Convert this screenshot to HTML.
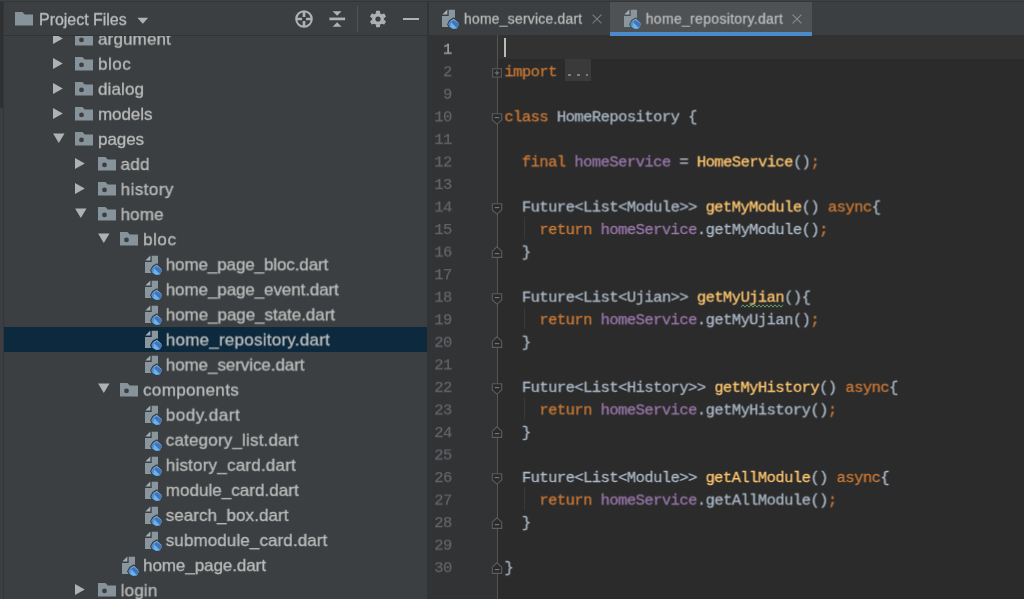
<!DOCTYPE html>
<html><head><meta charset="utf-8"><title>IDE</title>
<style>
html,body{margin:0;padding:0;}
body{width:1024px;height:599px;overflow:hidden;background:#3c3f41;position:relative;font-family:"Liberation Sans",sans-serif;}
.abs{position:absolute;}
.ic{position:absolute;display:block;overflow:visible;}
#topline{position:absolute;left:0;top:0;width:1024px;height:2.4px;background:#333536;border-top:0.9px solid #3e4143;box-sizing:border-box;}
#leftstrip{position:absolute;left:0;top:2px;width:3px;height:106px;background:#2e3032;}
#leftline{position:absolute;left:3px;top:2px;width:1px;height:597px;background:#333637;}
#tree{position:absolute;left:0;top:0;width:427.2px;height:599px;overflow:hidden;}
#hdr{position:absolute;left:4px;top:2px;width:423.2px;height:32.5px;background:#3c3f41;border-bottom:1px solid #313435;}
.sel{position:absolute;left:4px;width:423.2px;background:#0d293e;}
.layer{position:absolute;left:0;top:0;width:1024px;height:599px;will-change:transform;}
.tx,.ln,.cl,#ptitle,.tabtx{left:0;top:0;will-change:transform;transform-origin:0 0;}
.tx{position:absolute;height:25px;line-height:25px;font-size:17px;color:#bbbbbb;white-space:pre;-webkit-text-stroke:0.3px #bbbbbb;}
#ptitle{position:absolute;transform:translate(39.00px,4.15px) rotate(0.001deg);height:32px;line-height:32px;font-size:16px;color:#bbbbbb;white-space:pre;letter-spacing:-0.028px;-webkit-text-stroke:0.3px #bbbbbb;}
#editor{position:absolute;left:427.2px;top:2px;width:596.8px;height:597px;background:#2b2b2b;overflow:hidden;}
#tabs{position:absolute;left:427.2px;top:2px;width:596.8px;height:33px;background:#3c3f41;}
#tabsep{position:absolute;left:427.2px;top:2px;width:1.5px;height:33px;background:#323536;}
#atab{position:absolute;left:610.2px;top:2px;width:202px;height:33px;background:#4e5254;}
#aline{position:absolute;left:610.2px;top:32.2px;width:202px;height:4px;background:#4b8acb;}
.tabtx{position:absolute;height:33px;line-height:33px;color:#bbbbbb;white-space:pre;-webkit-text-stroke:0.25px #bbbbbb;}
#gutter{position:absolute;left:427.2px;top:35px;width:69.69999999999999px;height:564px;background:#313335;}
#gline{position:absolute;left:496.9px;top:35px;width:1px;height:564px;background:#555555;}
#curline{position:absolute;left:497.9px;top:35px;width:526.1px;height:23.80px;background:#323232;}
.ln,.cl{position:absolute;height:22px;line-height:22px;font-family:"Liberation Mono",monospace;font-size:15.5px;letter-spacing:-0.557px;white-space:pre;}
.ln{width:31.86px;text-align:right;color:#606366;-webkit-text-stroke:0.25px #606366;}
.ln.cur{color:#a4a3a3;-webkit-text-stroke:0.25px #a4a3a3;}
.cl{color:#a9b7c6;-webkit-text-stroke:0.27px;}
.k{color:#cc7832;} .t{color:#a9b7c6;} .f{color:#ffc66d;} .p{color:#9876aa;}
.fold{color:#7c7c7c;-webkit-text-stroke:0;}
#foldbg{position:absolute;left:565.2px;top:58.80px;width:26.2px;height:22.05px;background:#3a3a3a;}
.guide{position:absolute;width:1px;background:#393939;}
#caret{position:absolute;left:503.9px;top:38px;width:2.2px;height:19.3px;background:#bbbbbb;}
</style></head>
<body>
<div id="tree">
<svg class="ic" style="left:52.70px;top:31.80px" width="12" height="13" viewBox="0 0 12 13"><path d="M0 1 L9.8 6.5 L0 12 Z" fill="#afb1b3"/></svg>
<svg class="ic" style="left:75.05px;top:31.60px" width="20" height="16" viewBox="0 0 20 16"><path d="M0 0 H7.4 L9.8 2.6 H18.0 V13.4 H0 Z" fill="#87939a"/><circle cx="6.5" cy="7.9" r="2.4" fill="#3c3f41"/></svg>
<svg class="ic" style="left:52.70px;top:56.87px" width="12" height="13" viewBox="0 0 12 13"><path d="M0 1 L9.8 6.5 L0 12 Z" fill="#afb1b3"/></svg>
<svg class="ic" style="left:75.05px;top:56.67px" width="20" height="16" viewBox="0 0 20 16"><path d="M0 0 H7.4 L9.8 2.6 H18.0 V13.4 H0 Z" fill="#87939a"/><circle cx="6.5" cy="7.9" r="2.4" fill="#3c3f41"/></svg>
<svg class="ic" style="left:52.70px;top:81.94px" width="12" height="13" viewBox="0 0 12 13"><path d="M0 1 L9.8 6.5 L0 12 Z" fill="#afb1b3"/></svg>
<svg class="ic" style="left:75.05px;top:81.74px" width="20" height="16" viewBox="0 0 20 16"><path d="M0 0 H7.4 L9.8 2.6 H18.0 V13.4 H0 Z" fill="#87939a"/><circle cx="6.5" cy="7.9" r="2.4" fill="#3c3f41"/></svg>
<svg class="ic" style="left:52.70px;top:107.01px" width="12" height="13" viewBox="0 0 12 13"><path d="M0 1 L9.8 6.5 L0 12 Z" fill="#afb1b3"/></svg>
<svg class="ic" style="left:75.05px;top:106.81px" width="20" height="16" viewBox="0 0 20 16"><path d="M0 0 H7.4 L9.8 2.6 H18.0 V13.4 H0 Z" fill="#87939a"/><circle cx="6.5" cy="7.9" r="2.4" fill="#3c3f41"/></svg>
<svg class="ic" style="left:52.70px;top:132.58px" width="13" height="12" viewBox="0 0 13 12"><path d="M0.1 0.6 H11.5 L5.8 10 Z" fill="#afb1b3"/></svg>
<svg class="ic" style="left:75.05px;top:131.88px" width="20" height="16" viewBox="0 0 20 16"><path d="M0 0 H7.4 L9.8 2.6 H18.0 V13.4 H0 Z" fill="#87939a"/><circle cx="6.5" cy="7.9" r="2.4" fill="#3c3f41"/></svg>
<svg class="ic" style="left:75.25px;top:157.15px" width="12" height="13" viewBox="0 0 12 13"><path d="M0 1 L9.8 6.5 L0 12 Z" fill="#afb1b3"/></svg>
<svg class="ic" style="left:97.85px;top:156.95px" width="20" height="16" viewBox="0 0 20 16"><path d="M0 0 H7.4 L9.8 2.6 H18.0 V13.4 H0 Z" fill="#87939a"/><circle cx="6.5" cy="7.9" r="2.4" fill="#3c3f41"/></svg>
<svg class="ic" style="left:75.25px;top:182.22px" width="12" height="13" viewBox="0 0 12 13"><path d="M0 1 L9.8 6.5 L0 12 Z" fill="#afb1b3"/></svg>
<svg class="ic" style="left:97.85px;top:182.02px" width="20" height="16" viewBox="0 0 20 16"><path d="M0 0 H7.4 L9.8 2.6 H18.0 V13.4 H0 Z" fill="#87939a"/><circle cx="6.5" cy="7.9" r="2.4" fill="#3c3f41"/></svg>
<svg class="ic" style="left:75.25px;top:207.79px" width="13" height="12" viewBox="0 0 13 12"><path d="M0.1 0.6 H11.5 L5.8 10 Z" fill="#afb1b3"/></svg>
<svg class="ic" style="left:97.85px;top:207.09px" width="20" height="16" viewBox="0 0 20 16"><path d="M0 0 H7.4 L9.8 2.6 H18.0 V13.4 H0 Z" fill="#87939a"/><circle cx="6.5" cy="7.9" r="2.4" fill="#3c3f41"/></svg>
<svg class="ic" style="left:97.75px;top:232.86px" width="13" height="12" viewBox="0 0 13 12"><path d="M0.1 0.6 H11.5 L5.8 10 Z" fill="#afb1b3"/></svg>
<svg class="ic" style="left:120.00px;top:232.16px" width="20" height="16" viewBox="0 0 20 16"><path d="M0 0 H7.4 L9.8 2.6 H18.0 V13.4 H0 Z" fill="#87939a"/><circle cx="6.5" cy="7.9" r="2.4" fill="#3c3f41"/></svg>
<svg class="ic" style="left:143.1px;top:254.03px" width="22" height="23" viewBox="0 0 22 23"><path d="M8.7 1.75 H15 V19 H2 V7.9 H8.7 Z" fill="#8a969d"/><path d="M2.4 6.5 L7.4 1.5 V6.5 Z" fill="#a3afb6"/><path d="M13.8 9.3 L19.6 14.3 L20.1 17.2 L17.6 21.6 L12.8 22.4 L8.9 20.0 L7.1 16.2 L9.3 12.0 Z" fill="#3c3f41"/><path d="M13.85 10.80 L18.35 14.80 L18.75 17.10 L16.85 20.40 L13.05 21.00 L9.85 19.00 L8.45 16.20 L10.25 12.90 Z" fill="#69b3ee"/><path d="M8.45 16.20 L10.25 12.90 L11.05 12.50 L10.75 17.40 L9.85 19.00 Z" fill="#4f8ad0"/><path d="M10.9 13.9 L13.5 12.1 L18.2 15.3 L18.55 17.2 L16.9 20.1 Z" fill="#4672b6"/></svg>
<svg class="ic" style="left:143.1px;top:279.1px" width="22" height="23" viewBox="0 0 22 23"><path d="M8.7 1.75 H15 V19 H2 V7.9 H8.7 Z" fill="#8a969d"/><path d="M2.4 6.5 L7.4 1.5 V6.5 Z" fill="#a3afb6"/><path d="M13.8 9.3 L19.6 14.3 L20.1 17.2 L17.6 21.6 L12.8 22.4 L8.9 20.0 L7.1 16.2 L9.3 12.0 Z" fill="#3c3f41"/><path d="M13.85 10.80 L18.35 14.80 L18.75 17.10 L16.85 20.40 L13.05 21.00 L9.85 19.00 L8.45 16.20 L10.25 12.90 Z" fill="#69b3ee"/><path d="M8.45 16.20 L10.25 12.90 L11.05 12.50 L10.75 17.40 L9.85 19.00 Z" fill="#4f8ad0"/><path d="M10.9 13.9 L13.5 12.1 L18.2 15.3 L18.55 17.2 L16.9 20.1 Z" fill="#4672b6"/></svg>
<svg class="ic" style="left:143.1px;top:304.17px" width="22" height="23" viewBox="0 0 22 23"><path d="M8.7 1.75 H15 V19 H2 V7.9 H8.7 Z" fill="#8a969d"/><path d="M2.4 6.5 L7.4 1.5 V6.5 Z" fill="#a3afb6"/><path d="M13.8 9.3 L19.6 14.3 L20.1 17.2 L17.6 21.6 L12.8 22.4 L8.9 20.0 L7.1 16.2 L9.3 12.0 Z" fill="#3c3f41"/><path d="M13.85 10.80 L18.35 14.80 L18.75 17.10 L16.85 20.40 L13.05 21.00 L9.85 19.00 L8.45 16.20 L10.25 12.90 Z" fill="#69b3ee"/><path d="M8.45 16.20 L10.25 12.90 L11.05 12.50 L10.75 17.40 L9.85 19.00 Z" fill="#4f8ad0"/><path d="M10.9 13.9 L13.5 12.1 L18.2 15.3 L18.55 17.2 L16.9 20.1 Z" fill="#4672b6"/></svg>
<div class="sel" style="top:327.00px;height:24.6px"></div>
<svg class="ic" style="left:143.1px;top:329.24px" width="22" height="23" viewBox="0 0 22 23"><path d="M8.7 1.75 H15 V19 H2 V7.9 H8.7 Z" fill="#8a969d"/><path d="M2.4 6.5 L7.4 1.5 V6.5 Z" fill="#a3afb6"/><path d="M13.8 9.3 L19.6 14.3 L20.1 17.2 L17.6 21.6 L12.8 22.4 L8.9 20.0 L7.1 16.2 L9.3 12.0 Z" fill="#0d293e"/><path d="M13.85 10.80 L18.35 14.80 L18.75 17.10 L16.85 20.40 L13.05 21.00 L9.85 19.00 L8.45 16.20 L10.25 12.90 Z" fill="#69b3ee"/><path d="M8.45 16.20 L10.25 12.90 L11.05 12.50 L10.75 17.40 L9.85 19.00 Z" fill="#4f8ad0"/><path d="M10.9 13.9 L13.5 12.1 L18.2 15.3 L18.55 17.2 L16.9 20.1 Z" fill="#4672b6"/></svg>
<svg class="ic" style="left:143.1px;top:354.31px" width="22" height="23" viewBox="0 0 22 23"><path d="M8.7 1.75 H15 V19 H2 V7.9 H8.7 Z" fill="#8a969d"/><path d="M2.4 6.5 L7.4 1.5 V6.5 Z" fill="#a3afb6"/><path d="M13.8 9.3 L19.6 14.3 L20.1 17.2 L17.6 21.6 L12.8 22.4 L8.9 20.0 L7.1 16.2 L9.3 12.0 Z" fill="#3c3f41"/><path d="M13.85 10.80 L18.35 14.80 L18.75 17.10 L16.85 20.40 L13.05 21.00 L9.85 19.00 L8.45 16.20 L10.25 12.90 Z" fill="#69b3ee"/><path d="M8.45 16.20 L10.25 12.90 L11.05 12.50 L10.75 17.40 L9.85 19.00 Z" fill="#4f8ad0"/><path d="M10.9 13.9 L13.5 12.1 L18.2 15.3 L18.55 17.2 L16.9 20.1 Z" fill="#4672b6"/></svg>
<svg class="ic" style="left:97.75px;top:383.28px" width="13" height="12" viewBox="0 0 13 12"><path d="M0.1 0.6 H11.5 L5.8 10 Z" fill="#afb1b3"/></svg>
<svg class="ic" style="left:120.00px;top:382.58px" width="20" height="16" viewBox="0 0 20 16"><path d="M0 0 H7.4 L9.8 2.6 H18.0 V13.4 H0 Z" fill="#87939a"/><circle cx="6.5" cy="7.9" r="2.4" fill="#3c3f41"/></svg>
<svg class="ic" style="left:143.1px;top:404.45px" width="22" height="23" viewBox="0 0 22 23"><path d="M8.7 1.75 H15 V19 H2 V7.9 H8.7 Z" fill="#8a969d"/><path d="M2.4 6.5 L7.4 1.5 V6.5 Z" fill="#a3afb6"/><path d="M13.8 9.3 L19.6 14.3 L20.1 17.2 L17.6 21.6 L12.8 22.4 L8.9 20.0 L7.1 16.2 L9.3 12.0 Z" fill="#3c3f41"/><path d="M13.85 10.80 L18.35 14.80 L18.75 17.10 L16.85 20.40 L13.05 21.00 L9.85 19.00 L8.45 16.20 L10.25 12.90 Z" fill="#69b3ee"/><path d="M8.45 16.20 L10.25 12.90 L11.05 12.50 L10.75 17.40 L9.85 19.00 Z" fill="#4f8ad0"/><path d="M10.9 13.9 L13.5 12.1 L18.2 15.3 L18.55 17.2 L16.9 20.1 Z" fill="#4672b6"/></svg>
<svg class="ic" style="left:143.1px;top:429.52px" width="22" height="23" viewBox="0 0 22 23"><path d="M8.7 1.75 H15 V19 H2 V7.9 H8.7 Z" fill="#8a969d"/><path d="M2.4 6.5 L7.4 1.5 V6.5 Z" fill="#a3afb6"/><path d="M13.8 9.3 L19.6 14.3 L20.1 17.2 L17.6 21.6 L12.8 22.4 L8.9 20.0 L7.1 16.2 L9.3 12.0 Z" fill="#3c3f41"/><path d="M13.85 10.80 L18.35 14.80 L18.75 17.10 L16.85 20.40 L13.05 21.00 L9.85 19.00 L8.45 16.20 L10.25 12.90 Z" fill="#69b3ee"/><path d="M8.45 16.20 L10.25 12.90 L11.05 12.50 L10.75 17.40 L9.85 19.00 Z" fill="#4f8ad0"/><path d="M10.9 13.9 L13.5 12.1 L18.2 15.3 L18.55 17.2 L16.9 20.1 Z" fill="#4672b6"/></svg>
<svg class="ic" style="left:143.1px;top:454.59px" width="22" height="23" viewBox="0 0 22 23"><path d="M8.7 1.75 H15 V19 H2 V7.9 H8.7 Z" fill="#8a969d"/><path d="M2.4 6.5 L7.4 1.5 V6.5 Z" fill="#a3afb6"/><path d="M13.8 9.3 L19.6 14.3 L20.1 17.2 L17.6 21.6 L12.8 22.4 L8.9 20.0 L7.1 16.2 L9.3 12.0 Z" fill="#3c3f41"/><path d="M13.85 10.80 L18.35 14.80 L18.75 17.10 L16.85 20.40 L13.05 21.00 L9.85 19.00 L8.45 16.20 L10.25 12.90 Z" fill="#69b3ee"/><path d="M8.45 16.20 L10.25 12.90 L11.05 12.50 L10.75 17.40 L9.85 19.00 Z" fill="#4f8ad0"/><path d="M10.9 13.9 L13.5 12.1 L18.2 15.3 L18.55 17.2 L16.9 20.1 Z" fill="#4672b6"/></svg>
<svg class="ic" style="left:143.1px;top:479.66px" width="22" height="23" viewBox="0 0 22 23"><path d="M8.7 1.75 H15 V19 H2 V7.9 H8.7 Z" fill="#8a969d"/><path d="M2.4 6.5 L7.4 1.5 V6.5 Z" fill="#a3afb6"/><path d="M13.8 9.3 L19.6 14.3 L20.1 17.2 L17.6 21.6 L12.8 22.4 L8.9 20.0 L7.1 16.2 L9.3 12.0 Z" fill="#3c3f41"/><path d="M13.85 10.80 L18.35 14.80 L18.75 17.10 L16.85 20.40 L13.05 21.00 L9.85 19.00 L8.45 16.20 L10.25 12.90 Z" fill="#69b3ee"/><path d="M8.45 16.20 L10.25 12.90 L11.05 12.50 L10.75 17.40 L9.85 19.00 Z" fill="#4f8ad0"/><path d="M10.9 13.9 L13.5 12.1 L18.2 15.3 L18.55 17.2 L16.9 20.1 Z" fill="#4672b6"/></svg>
<svg class="ic" style="left:143.1px;top:504.73px" width="22" height="23" viewBox="0 0 22 23"><path d="M8.7 1.75 H15 V19 H2 V7.9 H8.7 Z" fill="#8a969d"/><path d="M2.4 6.5 L7.4 1.5 V6.5 Z" fill="#a3afb6"/><path d="M13.8 9.3 L19.6 14.3 L20.1 17.2 L17.6 21.6 L12.8 22.4 L8.9 20.0 L7.1 16.2 L9.3 12.0 Z" fill="#3c3f41"/><path d="M13.85 10.80 L18.35 14.80 L18.75 17.10 L16.85 20.40 L13.05 21.00 L9.85 19.00 L8.45 16.20 L10.25 12.90 Z" fill="#69b3ee"/><path d="M8.45 16.20 L10.25 12.90 L11.05 12.50 L10.75 17.40 L9.85 19.00 Z" fill="#4f8ad0"/><path d="M10.9 13.9 L13.5 12.1 L18.2 15.3 L18.55 17.2 L16.9 20.1 Z" fill="#4672b6"/></svg>
<svg class="ic" style="left:143.1px;top:529.8px" width="22" height="23" viewBox="0 0 22 23"><path d="M8.7 1.75 H15 V19 H2 V7.9 H8.7 Z" fill="#8a969d"/><path d="M2.4 6.5 L7.4 1.5 V6.5 Z" fill="#a3afb6"/><path d="M13.8 9.3 L19.6 14.3 L20.1 17.2 L17.6 21.6 L12.8 22.4 L8.9 20.0 L7.1 16.2 L9.3 12.0 Z" fill="#3c3f41"/><path d="M13.85 10.80 L18.35 14.80 L18.75 17.10 L16.85 20.40 L13.05 21.00 L9.85 19.00 L8.45 16.20 L10.25 12.90 Z" fill="#69b3ee"/><path d="M8.45 16.20 L10.25 12.90 L11.05 12.50 L10.75 17.40 L9.85 19.00 Z" fill="#4f8ad0"/><path d="M10.9 13.9 L13.5 12.1 L18.2 15.3 L18.55 17.2 L16.9 20.1 Z" fill="#4672b6"/></svg>
<svg class="ic" style="left:120.45px;top:554.87px" width="22" height="23" viewBox="0 0 22 23"><path d="M8.7 1.75 H15 V19 H2 V7.9 H8.7 Z" fill="#8a969d"/><path d="M2.4 6.5 L7.4 1.5 V6.5 Z" fill="#a3afb6"/><path d="M13.8 9.3 L19.6 14.3 L20.1 17.2 L17.6 21.6 L12.8 22.4 L8.9 20.0 L7.1 16.2 L9.3 12.0 Z" fill="#3c3f41"/><path d="M13.85 10.80 L18.35 14.80 L18.75 17.10 L16.85 20.40 L13.05 21.00 L9.85 19.00 L8.45 16.20 L10.25 12.90 Z" fill="#69b3ee"/><path d="M8.45 16.20 L10.25 12.90 L11.05 12.50 L10.75 17.40 L9.85 19.00 Z" fill="#4f8ad0"/><path d="M10.9 13.9 L13.5 12.1 L18.2 15.3 L18.55 17.2 L16.9 20.1 Z" fill="#4672b6"/></svg>
<svg class="ic" style="left:75.25px;top:583.34px" width="12" height="13" viewBox="0 0 12 13"><path d="M0 1 L9.8 6.5 L0 12 Z" fill="#afb1b3"/></svg>
<svg class="ic" style="left:97.85px;top:583.14px" width="20" height="16" viewBox="0 0 20 16"><path d="M0 0 H7.4 L9.8 2.6 H18.0 V13.4 H0 Z" fill="#87939a"/><circle cx="6.5" cy="7.9" r="2.4" fill="#3c3f41"/></svg>
<div class="tx" style="transform:translate(98.05px,26.65px) rotate(0.001deg);letter-spacing:0.143px">argument</div>
<div class="tx" style="transform:translate(98.05px,51.72px) rotate(0.001deg);letter-spacing:0.535px">bloc</div>
<div class="tx" style="transform:translate(98.05px,76.79px) rotate(0.001deg);letter-spacing:0.132px">dialog</div>
<div class="tx" style="transform:translate(98.05px,101.86px) rotate(0.001deg);letter-spacing:-0.079px">models</div>
<div class="tx" style="transform:translate(98.05px,126.93px) rotate(0.001deg);letter-spacing:-0.068px">pages</div>
<div class="tx" style="transform:translate(120.60px,152.00px) rotate(0.001deg);letter-spacing:0.285px">add</div>
<div class="tx" style="transform:translate(120.60px,177.07px) rotate(0.001deg);letter-spacing:0.455px">history</div>
<div class="tx" style="transform:translate(120.60px,202.14px) rotate(0.001deg);letter-spacing:0.114px">home</div>
<div class="tx" style="transform:translate(143.10px,227.21px) rotate(0.001deg);letter-spacing:0.568px">bloc</div>
<div class="tx" style="transform:translate(165.75px,252.28px) rotate(0.001deg);letter-spacing:-0.104px">home_page_bloc.dart</div>
<div class="tx" style="transform:translate(165.75px,277.35px) rotate(0.001deg);letter-spacing:-0.093px">home_page_event.dart</div>
<div class="tx" style="transform:translate(165.75px,302.42px) rotate(0.001deg);letter-spacing:-0.047px">home_page_state.dart</div>
<div class="tx" style="transform:translate(165.75px,327.49px) rotate(0.001deg);letter-spacing:0.244px">home_repository.dart</div>
<div class="tx" style="transform:translate(165.75px,352.56px) rotate(0.001deg);letter-spacing:-0.069px">home_service.dart</div>
<div class="tx" style="transform:translate(143.10px,377.63px) rotate(0.001deg);letter-spacing:0.345px">components</div>
<div class="tx" style="transform:translate(165.75px,402.70px) rotate(0.001deg);letter-spacing:0.549px">body.dart</div>
<div class="tx" style="transform:translate(165.75px,427.77px) rotate(0.001deg);letter-spacing:0.184px">category_list.dart</div>
<div class="tx" style="transform:translate(165.75px,452.84px) rotate(0.001deg);letter-spacing:0.212px">history_card.dart</div>
<div class="tx" style="transform:translate(165.75px,477.91px) rotate(0.001deg);letter-spacing:0.040px">module_card.dart</div>
<div class="tx" style="transform:translate(165.75px,502.98px) rotate(0.001deg);letter-spacing:0.053px">search_box.dart</div>
<div class="tx" style="transform:translate(165.75px,528.05px) rotate(0.001deg);letter-spacing:0.105px">submodule_card.dart</div>
<div class="tx" style="transform:translate(143.10px,553.12px) rotate(0.001deg);letter-spacing:-0.069px">home_page.dart</div>
<div class="tx" style="transform:translate(120.60px,578.19px) rotate(0.001deg);letter-spacing:0.213px">login</div>
</div>
<div id="hdr"></div>
<div id="topline"></div>
<div id="leftstrip"></div>
<div id="leftline"></div>
<svg class="ic" style="left:15.00px;top:11.80px" width="20" height="16" viewBox="0 0 20 16"><path d="M0 0 H7.4 L9.8 2.6 H18.0 V13.4 H0 Z" fill="#87939a"/></svg>
<div id="ptitle">Project Files</div>
<svg class="ic" style="left:137px;top:17px" width="12" height="8" viewBox="0 0 12 8"><path d="M0.4 0.8 H11.2 L5.8 6.8 Z" fill="#afb1b3"/></svg>
<!-- locate -->
<svg class="ic" style="left:294.4px;top:8.85px" width="20" height="20" viewBox="0 0 20 20"><circle cx="10" cy="10" r="7.75" fill="none" stroke="#afb1b3" stroke-width="2.1"/><path d="M10 2.2 V8.0 M10 12.0 V17.8 M2.2 10 H8.0 M12.0 10 H17.8" stroke="#afb1b3" stroke-width="2.7"/></svg>
<!-- collapse all -->
<svg class="ic" style="left:327px;top:8.75px" width="20" height="20" viewBox="0 0 20 20"><path d="M2.4 9.9 H18.1" stroke="#afb1b3" stroke-width="2.7"/><path d="M5.6 2.15 H14.6 L10.1 6.65 Z M5.6 17.85 H14.6 L10.1 13.15 Z" fill="#afb1b3"/></svg>
<div class="abs" style="left:357.2px;top:6px;width:1px;height:25.5px;background:#515355;"></div>
<!-- gear -->
<svg class="ic" style="left:368.4px;top:8.7px" width="20" height="20" viewBox="0 0 20 20"><g fill="#afb1b3"><circle cx="10" cy="10" r="6.0"/><path d="M7.65 4.40 L8.25 1.80 L11.75 1.80 L12.35 4.40 Z M13.67 5.16 L16.23 4.38 L17.98 7.42 L16.02 9.24 Z M16.02 10.76 L17.98 12.58 L16.23 15.62 L13.67 14.84 Z M12.35 15.60 L11.75 18.20 L8.25 18.20 L7.65 15.60 Z M6.33 14.84 L3.77 15.62 L2.02 12.58 L3.98 10.76 Z M3.98 9.24 L2.02 7.42 L3.77 4.38 L6.33 5.16 Z "/></g><circle cx="10" cy="10" r="2.6" fill="#3c3f41"/></svg>
<div class="abs" style="left:403.3px;top:17.55px;width:15.5px;height:2.4px;background:#afb1b3;"></div>

<div id="editor"></div>
<div id="tabs"></div>
<div id="tabsep"></div>
<div id="atab"></div>
<svg class="ic" style="left:440.0px;top:8.2px" width="22" height="23" viewBox="0 0 22 23"><path d="M8.7 1.75 H15 V19 H2 V7.9 H8.7 Z" fill="#8a969d"/><path d="M2.4 6.5 L7.4 1.5 V6.5 Z" fill="#a3afb6"/><path d="M13.8 9.3 L19.6 14.3 L20.1 17.2 L17.6 21.6 L12.8 22.4 L8.9 20.0 L7.1 16.2 L9.3 12.0 Z" fill="#3c3f41"/><path d="M13.85 10.80 L18.35 14.80 L18.75 17.10 L16.85 20.40 L13.05 21.00 L9.85 19.00 L8.45 16.20 L10.25 12.90 Z" fill="#69b3ee"/><path d="M8.45 16.20 L10.25 12.90 L11.05 12.50 L10.75 17.40 L9.85 19.00 Z" fill="#4f8ad0"/><path d="M10.9 13.9 L13.5 12.1 L18.2 15.3 L18.55 17.2 L16.9 20.1 Z" fill="#4672b6"/></svg>
<div class="tabtx" style="transform:translate(463.90px,2.70px) rotate(0.001deg);font-size:14px;letter-spacing:0.189px">home_service.dart</div>
<svg class="ic" style="left:591.5px;top:14.2px" width="10" height="10" viewBox="0 0 10 10"><path d="M0.6 0.6 L9.4 9.4 M9.4 0.6 L0.6 9.4" stroke="#7b7e80" stroke-width="1.1"/></svg>
<svg class="ic" style="left:622.2px;top:8.2px" width="22" height="23" viewBox="0 0 22 23"><path d="M8.7 1.75 H15 V19 H2 V7.9 H8.7 Z" fill="#8a969d"/><path d="M2.4 6.5 L7.4 1.5 V6.5 Z" fill="#a3afb6"/><path d="M13.8 9.3 L19.6 14.3 L20.1 17.2 L17.6 21.6 L12.8 22.4 L8.9 20.0 L7.1 16.2 L9.3 12.0 Z" fill="#4e5254"/><path d="M13.85 10.80 L18.35 14.80 L18.75 17.10 L16.85 20.40 L13.05 21.00 L9.85 19.00 L8.45 16.20 L10.25 12.90 Z" fill="#69b3ee"/><path d="M8.45 16.20 L10.25 12.90 L11.05 12.50 L10.75 17.40 L9.85 19.00 Z" fill="#4f8ad0"/><path d="M10.9 13.9 L13.5 12.1 L18.2 15.3 L18.55 17.2 L16.9 20.1 Z" fill="#4672b6"/></svg>
<div class="tabtx" style="transform:translate(645.70px,2.70px) rotate(0.001deg);font-size:14px;letter-spacing:0.313px">home_repository.dart</div>
<svg class="ic" style="left:792.0px;top:14.2px" width="10" height="10" viewBox="0 0 10 10"><path d="M0.6 0.6 L9.4 9.4 M9.4 0.6 L0.6 9.4" stroke="#8a8d8f" stroke-width="1.1"/></svg>

<div id="gutter"></div>
<div id="curline"></div>
<div id="aline"></div>
<div id="gline"></div>
<div id="foldbg"></div>
<div class="abs" style="left:568.37px;top:73.70px;width:2.4px;height:2.5px;border-radius:0.6px;background:#838383"></div><div class="abs" style="left:577.12px;top:73.70px;width:2.4px;height:2.5px;border-radius:0.6px;background:#838383"></div><div class="abs" style="left:585.86px;top:73.70px;width:2.4px;height:2.5px;border-radius:0.6px;background:#838383"></div>
<div class="guide" style="left:524.2px;top:216.62px;height:22.55px"></div><div class="guide" style="left:524.2px;top:306.80px;height:22.55px"></div><div class="guide" style="left:524.2px;top:396.98px;height:22.55px"></div><div class="guide" style="left:524.2px;top:487.16px;height:22.55px"></div>
<div class="ln cur" style="transform:translate(420.00px,38.65px) rotate(0.001deg)">1</div><div class="ln" style="transform:translate(420.00px,61.20px) rotate(0.001deg)">2</div><div class="cl" style="transform:translate(504.40px,61.20px) rotate(0.001deg)"><span class="k">import</span><span class="t"> </span><span class="fold">   </span></div><div class="ln" style="transform:translate(420.00px,83.74px) rotate(0.001deg)">9</div><div class="ln" style="transform:translate(420.00px,106.29px) rotate(0.001deg)">10</div><div class="cl" style="transform:translate(504.40px,106.29px) rotate(0.001deg)"><span class="k">class</span><span class="t"> HomeRepository {</span></div><div class="ln" style="transform:translate(420.00px,128.84px) rotate(0.001deg)">11</div><div class="ln" style="transform:translate(420.00px,151.38px) rotate(0.001deg)">12</div><div class="cl" style="transform:translate(504.40px,151.38px) rotate(0.001deg)"><span class="t">  </span><span class="k">final</span><span class="t"> </span><span class="p">homeService</span><span class="t"> = </span><span class="f">HomeService</span><span class="t">()</span><span class="k">;</span></div><div class="ln" style="transform:translate(420.00px,173.92px) rotate(0.001deg)">13</div><div class="ln" style="transform:translate(420.00px,196.47px) rotate(0.001deg)">14</div><div class="cl" style="transform:translate(504.40px,196.47px) rotate(0.001deg)"><span class="t">  Future&lt;List&lt;Module&gt;&gt; </span><span class="f">getMyModule</span><span class="t">() </span><span class="k">async</span><span class="t">{</span></div><div class="ln" style="transform:translate(420.00px,219.01px) rotate(0.001deg)">15</div><div class="cl" style="transform:translate(504.40px,219.01px) rotate(0.001deg)"><span class="t">    </span><span class="k">return</span><span class="t"> </span><span class="p">homeService</span><span class="t">.getMyModule()</span><span class="k">;</span></div><div class="ln" style="transform:translate(420.00px,241.56px) rotate(0.001deg)">16</div><div class="cl" style="transform:translate(504.40px,241.56px) rotate(0.001deg)"><span class="t">  }</span></div><div class="ln" style="transform:translate(420.00px,264.11px) rotate(0.001deg)">17</div><div class="ln" style="transform:translate(420.00px,286.65px) rotate(0.001deg)">18</div><div class="cl" style="transform:translate(504.40px,286.65px) rotate(0.001deg)"><span class="t">  Future&lt;List&lt;Ujian&gt;&gt; </span><span class="f">getMy</span><span class="f">Ujian</span><span class="t">(){</span></div><div class="ln" style="transform:translate(420.00px,309.20px) rotate(0.001deg)">19</div><div class="cl" style="transform:translate(504.40px,309.20px) rotate(0.001deg)"><span class="t">    </span><span class="k">return</span><span class="t"> </span><span class="p">homeService</span><span class="t">.getMyUjian()</span><span class="k">;</span></div><div class="ln" style="transform:translate(420.00px,331.74px) rotate(0.001deg)">20</div><div class="cl" style="transform:translate(504.40px,331.74px) rotate(0.001deg)"><span class="t">  }</span></div><div class="ln" style="transform:translate(420.00px,354.29px) rotate(0.001deg)">21</div><div class="ln" style="transform:translate(420.00px,376.83px) rotate(0.001deg)">22</div><div class="cl" style="transform:translate(504.40px,376.83px) rotate(0.001deg)"><span class="t">  Future&lt;List&lt;History&gt;&gt; </span><span class="f">getMyHistory</span><span class="t">() </span><span class="k">async</span><span class="t">{</span></div><div class="ln" style="transform:translate(420.00px,399.38px) rotate(0.001deg)">23</div><div class="cl" style="transform:translate(504.40px,399.38px) rotate(0.001deg)"><span class="t">    </span><span class="k">return</span><span class="t"> </span><span class="p">homeService</span><span class="t">.getMyHistory()</span><span class="k">;</span></div><div class="ln" style="transform:translate(420.00px,421.92px) rotate(0.001deg)">24</div><div class="cl" style="transform:translate(504.40px,421.92px) rotate(0.001deg)"><span class="t">  }</span></div><div class="ln" style="transform:translate(420.00px,444.47px) rotate(0.001deg)">25</div><div class="ln" style="transform:translate(420.00px,467.01px) rotate(0.001deg)">26</div><div class="cl" style="transform:translate(504.40px,467.01px) rotate(0.001deg)"><span class="t">  Future&lt;List&lt;Module&gt;&gt; </span><span class="f">getAllModule</span><span class="t">() </span><span class="k">async</span><span class="t">{</span></div><div class="ln" style="transform:translate(420.00px,489.56px) rotate(0.001deg)">27</div><div class="cl" style="transform:translate(504.40px,489.56px) rotate(0.001deg)"><span class="t">    </span><span class="k">return</span><span class="t"> </span><span class="p">homeService</span><span class="t">.getAllModule()</span><span class="k">;</span></div><div class="ln" style="transform:translate(420.00px,512.10px) rotate(0.001deg)">28</div><div class="cl" style="transform:translate(504.40px,512.10px) rotate(0.001deg)"><span class="t">  }</span></div><div class="ln" style="transform:translate(420.00px,534.65px) rotate(0.001deg)">29</div><div class="ln" style="transform:translate(420.00px,557.19px) rotate(0.001deg)">30</div><div class="cl" style="transform:translate(504.40px,557.19px) rotate(0.001deg)"><span class="t">}</span></div>
<svg class="ic" style="left:491.40px;top:66.80px" width="12" height="12" viewBox="0 0 12 12"><rect x="1.6" y="1.7" width="8.8" height="8.4" fill="#2b2b2b" stroke="#5a5d60" stroke-width="1"/><path d="M3.6 5.9 H8.4 M6 3.5 V8.3" stroke="#777a7d" stroke-width="1"/></svg><svg class="ic" style="left:491.40px;top:111.69px" width="12" height="14" viewBox="0 0 12 14"><path d="M1.3 1.8 H10.7 V7.9 L6 12.1 L1.3 7.9 Z" fill="#2b2b2b" stroke="#5a5d60" stroke-width="1.1"/><path d="M3.7 5.6 H8.3" stroke="#777a7d" stroke-width="1.1"/></svg><svg class="ic" style="left:491.40px;top:201.87px" width="12" height="14" viewBox="0 0 12 14"><path d="M1.3 1.8 H10.7 V7.9 L6 12.1 L1.3 7.9 Z" fill="#2b2b2b" stroke="#5a5d60" stroke-width="1.1"/><path d="M3.7 5.6 H8.3" stroke="#777a7d" stroke-width="1.1"/></svg><svg class="ic" style="left:491.40px;top:292.05px" width="12" height="14" viewBox="0 0 12 14"><path d="M1.3 1.8 H10.7 V7.9 L6 12.1 L1.3 7.9 Z" fill="#2b2b2b" stroke="#5a5d60" stroke-width="1.1"/><path d="M3.7 5.6 H8.3" stroke="#777a7d" stroke-width="1.1"/></svg><svg class="ic" style="left:491.40px;top:382.23px" width="12" height="14" viewBox="0 0 12 14"><path d="M1.3 1.8 H10.7 V7.9 L6 12.1 L1.3 7.9 Z" fill="#2b2b2b" stroke="#5a5d60" stroke-width="1.1"/><path d="M3.7 5.6 H8.3" stroke="#777a7d" stroke-width="1.1"/></svg><svg class="ic" style="left:491.40px;top:472.41px" width="12" height="14" viewBox="0 0 12 14"><path d="M1.3 1.8 H10.7 V7.9 L6 12.1 L1.3 7.9 Z" fill="#2b2b2b" stroke="#5a5d60" stroke-width="1.1"/><path d="M3.7 5.6 H8.3" stroke="#777a7d" stroke-width="1.1"/></svg><svg class="ic" style="left:491.40px;top:244.96px" width="12" height="14" viewBox="0 0 12 14"><path d="M1.3 12.4 H10.7 V6.2 L6 1.8 L1.3 6.2 Z" fill="#2b2b2b" stroke="#5a5d60" stroke-width="1.1"/><path d="M3.7 8.6 H8.3" stroke="#777a7d" stroke-width="1.1"/></svg><svg class="ic" style="left:491.40px;top:335.14px" width="12" height="14" viewBox="0 0 12 14"><path d="M1.3 12.4 H10.7 V6.2 L6 1.8 L1.3 6.2 Z" fill="#2b2b2b" stroke="#5a5d60" stroke-width="1.1"/><path d="M3.7 8.6 H8.3" stroke="#777a7d" stroke-width="1.1"/></svg><svg class="ic" style="left:491.40px;top:425.32px" width="12" height="14" viewBox="0 0 12 14"><path d="M1.3 12.4 H10.7 V6.2 L6 1.8 L1.3 6.2 Z" fill="#2b2b2b" stroke="#5a5d60" stroke-width="1.1"/><path d="M3.7 8.6 H8.3" stroke="#777a7d" stroke-width="1.1"/></svg><svg class="ic" style="left:491.40px;top:515.50px" width="12" height="14" viewBox="0 0 12 14"><path d="M1.3 12.4 H10.7 V6.2 L6 1.8 L1.3 6.2 Z" fill="#2b2b2b" stroke="#5a5d60" stroke-width="1.1"/><path d="M3.7 8.6 H8.3" stroke="#777a7d" stroke-width="1.1"/></svg><svg class="ic" style="left:491.40px;top:560.59px" width="12" height="14" viewBox="0 0 12 14"><path d="M1.3 12.4 H10.7 V6.2 L6 1.8 L1.3 6.2 Z" fill="#2b2b2b" stroke="#5a5d60" stroke-width="1.1"/><path d="M3.7 8.6 H8.3" stroke="#777a7d" stroke-width="1.1"/></svg>
<svg class="ic" style="left:739.91px;top:303.65px" width="45.23" height="4" viewBox="0 0 45.23 4"><polyline points="1.00 3.20 3.00 0.80 5.00 3.20 7.00 0.80 9.00 3.20 11.00 0.80 13.00 3.20 15.00 0.80 17.00 3.20 19.00 0.80 21.00 3.20 23.00 0.80 25.00 3.20 27.00 0.80 29.00 3.20 31.00 0.80 33.00 3.20 35.00 0.80 37.00 3.20 39.00 0.80 41.00 3.20 43.00 0.80" fill="none" stroke="#5f9f67" stroke-width="1" stroke-linejoin="round"/></svg>
<div id="caret"></div>
</body></html>
